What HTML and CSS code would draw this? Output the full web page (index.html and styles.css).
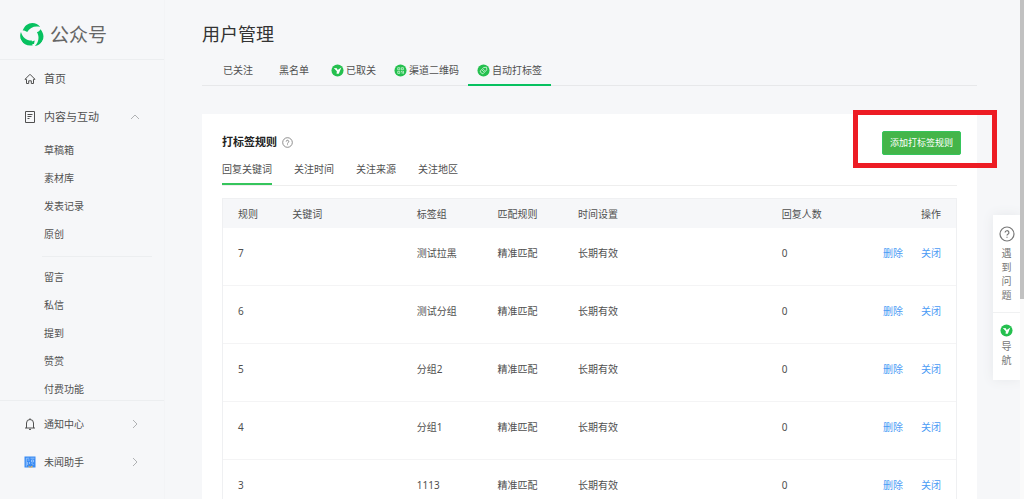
FILE: index.html
```html
<!DOCTYPE html>
<html lang="zh-CN">
<head>
<meta charset="utf-8">
<title>用户管理 - 公众号</title>
<link rel="stylesheet" href="styles.css">
</head>
<body>
<svg width="0" height="0" class="defs" aria-hidden="true">
  <symbol id="swoosh" viewBox="0 0 24 24"><path d="M2.700 7.600C4.300 2.800 8.200 0 12.300 0c3.200 0 6 1.500 7.900 4C15 2.600 9.800 4.300 7.200 9.100 5.900 8.100 4.300 7.500 2.700 7.600z"/></symbol>
  <symbol id="plane" viewBox="0 0 14 14"><circle cx="7" cy="7" r="6.500" fill="#25c04f"/><path d="M3 4.300l3.300.2.900 2 3.900-2.600-2.700 6.600H6l.3-2.700z" fill="#fff"/></symbol>
  <symbol id="help" viewBox="0 0 16 16"><circle cx="8" cy="8" r="7" fill="none" stroke="currentColor" stroke-width="1.200"/><path d="M6.100 6.600a1.900 1.900 0 1 1 2.800 1.700c-.7.4-.9.7-.9 1.300M8 10.700v1.100" fill="none" stroke="currentColor" stroke-width="1.200"/></symbol>
  <symbol id="chevron" viewBox="0 0 10 10"><path d="M3 1l4 4-4 4" fill="none" stroke="currentColor"/></symbol>
</svg>
<div class="app">
  <aside class="sidebar">
    <div class="brand">
      <svg class="logo" viewBox="0 0 24 24" fill="#07c160"><use href="#swoosh"/><use href="#swoosh" transform="rotate(120 12 12)"/><use href="#swoosh" transform="rotate(240 12 12)"/><path d="M6.500 21l.2-3.200c2.500 1.200 5.500 1 8-.3L14 21z"/></svg>
      <span>公众号</span>
    </div>
    <nav>
      <a class="entry" href="#"><svg class="entry-icon" viewBox="0 0 12 12" fill="none" stroke="currentColor"><path d="M1 6.300L6 1.300l5 5H9.500v4.200H7.300V7.800H4.700v2.700H2.500V6.300z"/></svg><span>首页</span></a>
      <a class="entry" href="#"><svg class="entry-icon" viewBox="0 0 12 12" fill="none" stroke="currentColor"><path d="M1.500.5h9v11h-9zM3.500 3.500h5M3.500 5.500h4M3.500 7.500h2"/></svg><span>内容与互动</span><svg class="arrow up"><use href="#chevron"/></svg></a>
      <ul class="sub">
        <li><a href="#">草稿箱</a></li><li><a href="#">素材库</a></li><li><a href="#">发表记录</a></li><li><a href="#">原创</a></li>
      </ul>
      <ul class="sub divided">
        <li><a href="#">留言</a></li><li><a href="#">私信</a></li><li><a href="#">提到</a></li><li><a href="#">赞赏</a></li><li><a href="#">付费功能</a></li>
      </ul>
    </nav>
    <div class="side-foot">
      <a class="entry small" href="#"><svg class="entry-icon" viewBox="0 0 12 12" fill="none" stroke="currentColor"><path d="M1 10h10M2.500 10V5a3.500 3.500 0 0 1 7 0v5M6 1.500V.3M5 11.400h2"/></svg><span>通知中心</span><svg class="arrow"><use href="#chevron"/></svg></a>
      <a class="entry small" href="#"><svg class="entry-icon" viewBox="0 0 12 12"><path d="M.5.500h11v11H.5z" fill="#398bf3"/><path d="M2.300 10.500V2.200h3M6.500 2.200h4M3.600 4h2M7.500 4h2v2h-2zM3.600 6v3M5.500 6v2M7.500 7.500l2 1" fill="none" stroke="#b5d5ff" stroke-width=".7"/><path d="M4.200 9.500l2 1.500 2.500-1.400-.5 2H5z" fill="#f7b64b"/></svg><span>未闻助手</span><svg class="arrow"><use href="#chevron"/></svg></a>
    </div>
  </aside>

  <main class="main">
    <h1>用户管理</h1>
    <nav class="tabs">
      <a class="tab plain" href="#">已关注</a>
      <a class="tab plain" href="#">黑名单</a>
      <a class="tab" href="#"><svg class="badge"><use href="#plane"/></svg>已取关</a>
      <a class="tab" href="#"><svg class="badge" viewBox="0 0 14 14"><circle cx="7" cy="7" r="6.500" fill="#25c04f"/><path d="M4 4h2.200v2.200H4zM7.900 4h2.200v2.200H7.900zM4 7.900h2.200v2.200H4zM7.500 8h1.300v2.500M10.200 7.500v3" fill="none" stroke="#d8f7df" stroke-width=".8"/></svg>渠道二维码</a>
      <a class="tab active" href="#" aria-current="page"><svg class="badge" viewBox="0 0 14 14"><circle cx="7" cy="7" r="6.500" fill="#25c04f"/><path d="M3.500 7.500L7.300 3.800l3-.3.200 2.800-3.900 4.100c-1 .6-3.500-1.700-3.100-2.900zM5.400 7.600l2-2M6.500 8.700l2-2" fill="none" stroke="#d8f7df" stroke-width=".9"/></svg>自动打标签</a>
    </nav>

    <section class="card">
      <header class="card-head">
        <h2>打标签规则</h2>
        <svg class="hint"><use href="#help"/></svg>
        <div class="action">
          <button type="button">添加打标签规则</button>
          <div class="marker"></div>
        </div>
      </header>
      <nav class="subtabs">
        <a class="active" href="#" aria-current="page">回复关键词</a><a href="#">关注时间</a><a href="#">关注来源</a><a href="#">关注地区</a>
      </nav>
      <table>
        <colgroup><col class="c-rule"><col class="c-key"><col class="c-group"><col class="c-match"><col class="c-time"><col class="c-count"><col></colgroup>
        <thead><tr><th>规则</th><th>关键词</th><th>标签组</th><th>匹配规则</th><th>时间设置</th><th>回复人数</th><th class="ops">操作</th></tr></thead>
        <tbody>
          <tr><td>7</td><td></td><td>测试拉黑</td><td>精准匹配</td><td>长期有效</td><td>0</td><td class="ops"><a href="#">删除</a><a href="#">关闭</a></td></tr>
          <tr><td>6</td><td></td><td>测试分组</td><td>精准匹配</td><td>长期有效</td><td>0</td><td class="ops"><a href="#">删除</a><a href="#">关闭</a></td></tr>
          <tr><td>5</td><td></td><td>分组2</td><td>精准匹配</td><td>长期有效</td><td>0</td><td class="ops"><a href="#">删除</a><a href="#">关闭</a></td></tr>
          <tr><td>4</td><td></td><td>分组1</td><td>精准匹配</td><td>长期有效</td><td>0</td><td class="ops"><a href="#">删除</a><a href="#">关闭</a></td></tr>
          <tr><td>3</td><td></td><td>1113</td><td>精准匹配</td><td>长期有效</td><td>0</td><td class="ops"><a href="#">删除</a><a href="#">关闭</a></td></tr>
        </tbody>
      </table>
    </section>
  </main>
</div>

<aside class="float">
  <a class="float-item help" href="#"><svg class="float-help"><use href="#help"/></svg><span>遇到问题</span></a>
  <a class="float-item" href="#"><svg class="float-badge"><use href="#plane"/></svg><span>导航</span></a>
</aside>
<div class="scroll" aria-hidden="true"><div class="thumb"></div></div>
</body>
</html>
```

FILE: styles.css
```css
* { box-sizing: border-box; }
body {
  margin: 0;
  background: #f6f7f9;
  color: #505050;
  font: 10px/20px "Noto Sans", "Noto Sans CJK SC", sans-serif;
}
a { color: inherit; text-decoration: none; }
h1, h2, ul { margin: 0; padding: 0; }
ul { list-style: none; }
svg { display: block; flex: none; }
.defs { position: absolute; }

.app { display: flex; height: 100vh; overflow: hidden; }

.sidebar { flex: none; width: 165px; border-right: 1px solid #f3f4f6; }
.brand {
  display: flex;
  align-items: center;
  gap: 6px;
  height: 60px;
  padding: 10px 20px 0;
  border-bottom: 1px solid #eceef0;
  color: #666;
  font-size: 19px;
}
.logo { width: 24px; height: 24px; }
.entry {
  display: flex;
  align-items: center;
  gap: 8px;
  height: 38px;
  padding: 0 24px;
  font-size: 11px;
}
.entry.small { font-size: 10px; }
.entry-icon { width: 12px; height: 12px; }
.arrow { width: 10px; height: 10px; margin-left: auto; color: #b0b2b4; }
.arrow.up { transform: rotate(-90deg); }
.sub {
  display: flex;
  flex-direction: column;
  gap: 8px;
  margin: 0 12px 0 42px;
  padding: 4px 2px 12px;
}
.sub.divided { padding: 10px 2px 1px; border-top: 1px solid #eceef0; }
.side-foot { padding-top: 4px; border-top: 1px solid #eceef0; }

.main { flex: 1; min-width: 0; padding: 20px 47px 0 37px; }
h1 { color: #333; font-size: 18px; font-weight: 400; line-height: 28px; }
.tabs {
  display: flex;
  height: 30px;
  margin: 8px 0 28px;
  padding-left: 8px;
  border-bottom: 1px solid #e7e8ea;
}
.tab {
  display: flex;
  align-items: center;
  gap: 2px;
  height: 30px;
  padding: 0 9px;
  border-bottom: 2px solid transparent;
}
.tab.plain { padding: 0 13px; }
.tab.active { border-color: #07c160; }
.badge { width: 13px; height: 13px; }

.card { padding: 16px 20px; background: #fff; }
.card-head {
  display: flex;
  gap: 5px;
  height: 26px;
  margin-right: -4px;
}
h2 { padding-top: 2px; color: #222; font-size: 11px; font-weight: 700; }
.hint { width: 11px; height: 11px; margin-top: 7px; color: #777; }
.action { position: relative; margin: 1px 0 0 auto; }
button {
  display: block;
  height: 24px;
  padding: 0 7px;
  border: 1px solid #35c55c;
  border-radius: 2px;
  background: #44b549;
  color: #fff;
  font: inherit;
  font-size: 9px;
  line-height: 20px;
}
.marker {
  position: absolute;
  inset: -21px -36px -12px -29px;
  border: 5px solid #ed1c24;
  pointer-events: none;
}
.subtabs {
  display: flex;
  gap: 22px;
  height: 30px;
  margin-bottom: 12px;
  border-bottom: 1px solid #eee;
}
.subtabs a { height: 29px; line-height: 26px; border-bottom: 2px solid transparent; }
.subtabs a.active { border-color: #35c55c; }

table {
  width: 100%;
  table-layout: fixed;
  border: 1px solid #eff0f2;
  border-spacing: 0;
}
.c-rule { width: 7.4%; }
.c-key { width: 17%; }
.c-group, .c-match { width: 11%; }
.c-time { width: 27.8%; }
.c-count { width: 10%; }
th, td { padding: 0 15px; text-align: left; font-weight: 400; }
th { height: 29px; background: #f6f7f9; }
td { height: 58px; padding-bottom: 8px; border-bottom: 1px solid #f4f4f5; }
th.ops, td.ops { text-align: right; white-space: nowrap; }
td.ops a { margin-left: 18px; color: #4a9bf5; }

.float { position: fixed; top: 215px; right: 4px; width: 27px; box-shadow: 0 0 12px #e6e8eb; }
.float-item {
  display: flex;
  flex-direction: column;
  align-items: center;
  padding: 11px 8px 13px;
  background: #fff;
  color: #777;
  line-height: 14px;
  text-align: center;
}
.float-item.help { padding-bottom: 10px; border-bottom: 1px solid #f0f1f2; }
.float-item span { width: 10px; }
.float-help { width: 16px; height: 16px; margin-bottom: 4px; }
.float-badge { width: 13px; height: 13px; margin-bottom: 2px; }

.scroll { position: fixed; top: 0; right: 0; width: 4px; height: 100vh; background: #fafafa; }
.thumb { height: 60%; background: #c1c1c1; }
```
